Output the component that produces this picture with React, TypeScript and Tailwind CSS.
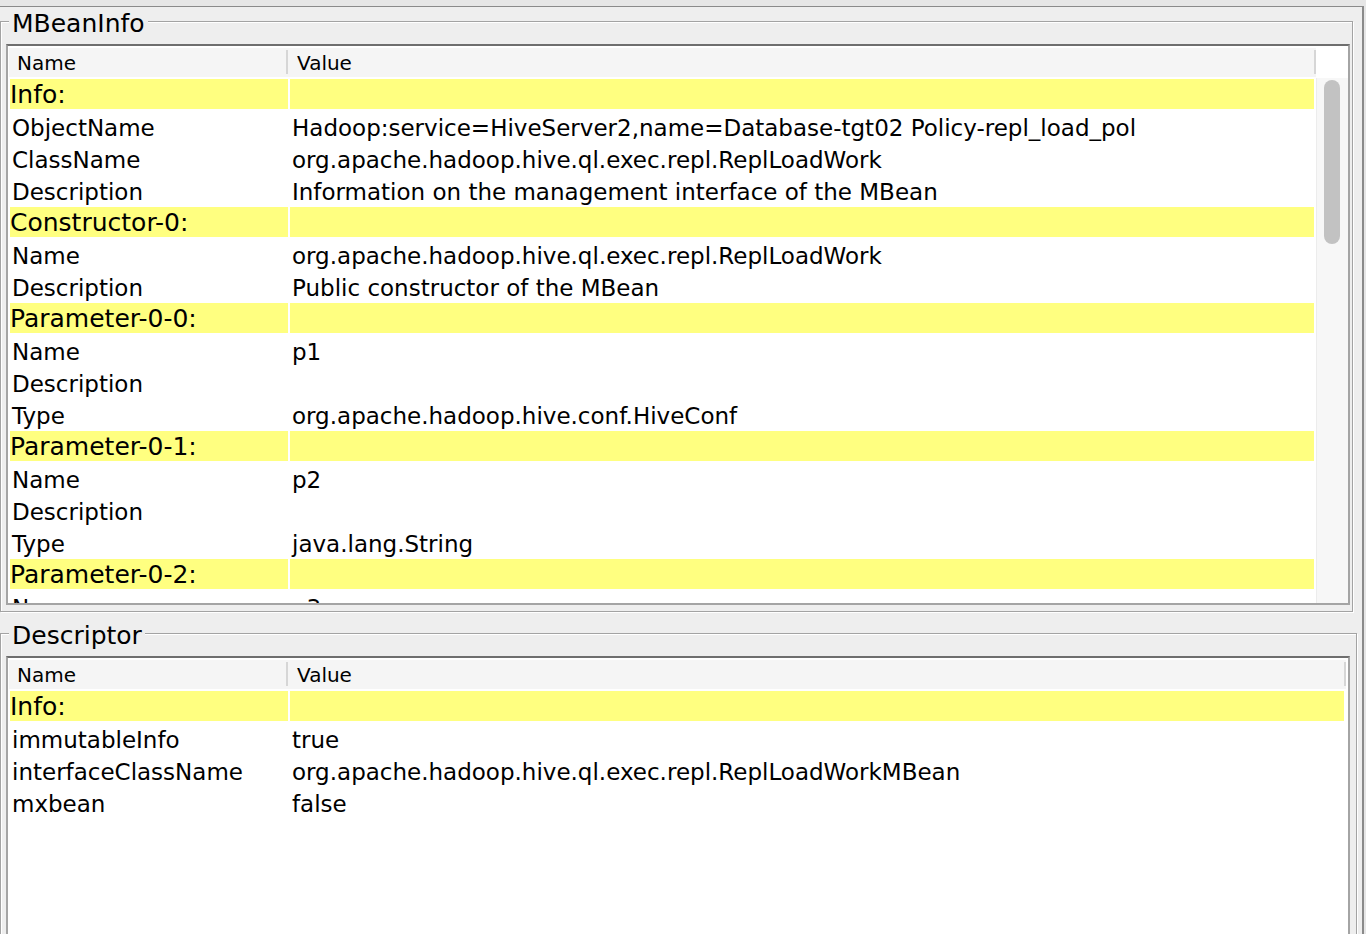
import React from 'react';

type Row = { section: string } | { name: string; value: string };

const mbeanRows: Row[] = [
  { section: 'Info:' },
  { name: 'ObjectName', value: 'Hadoop:service=HiveServer2,name=Database-tgt02 Policy-repl_load_pol' },
  { name: 'ClassName', value: 'org.apache.hadoop.hive.ql.exec.repl.ReplLoadWork' },
  { name: 'Description', value: 'Information on the management interface of the MBean' },
  { section: 'Constructor-0:' },
  { name: 'Name', value: 'org.apache.hadoop.hive.ql.exec.repl.ReplLoadWork' },
  { name: 'Description', value: 'Public constructor of the MBean' },
  { section: 'Parameter-0-0:' },
  { name: 'Name', value: 'p1' },
  { name: 'Description', value: '' },
  { name: 'Type', value: 'org.apache.hadoop.hive.conf.HiveConf' },
  { section: 'Parameter-0-1:' },
  { name: 'Name', value: 'p2' },
  { name: 'Description', value: '' },
  { name: 'Type', value: 'java.lang.String' },
  { section: 'Parameter-0-2:' },
  { name: 'Name', value: 'p3' },
];

const descriptorRows: Row[] = [
  { section: 'Info:' },
  { name: 'immutableInfo', value: 'true' },
  { name: 'interfaceClassName', value: 'org.apache.hadoop.hive.ql.exec.repl.ReplLoadWorkMBean' },
  { name: 'mxbean', value: 'false' },
];

const TableHeader = () => (
  <div className="flex h-[32px] pt-[2px] pb-[1px] pl-[1px]">
    <div className="flex flex-1 bg-[#f5f5f5]">
      <div className="relative w-[279px] pl-[8px] text-[20px] leading-[29px] pt-[1px]">
        Name
        <div className="absolute right-0 top-[2px] h-[24px] w-[2px] bg-[#d6d6d6]" />
      </div>
      <div className="relative flex-1 pl-[9px] text-[20px] leading-[29px] pt-[1px]">
        Value
        <div className="absolute right-0 top-[2px] h-[24px] w-[2px] bg-[#d6d6d6]" />
      </div>
    </div>
  </div>
);

const TableRows = ({ rows }: { rows: Row[] }) => (
  <div>
    {rows.map((row, i) =>
      'section' in row ? (
        <div key={i} className="flex h-[32px] gap-[2px] py-[1px] pl-[2px] pr-[2px]">
          <div className="w-[278px] bg-[#ffff80] pt-[1px] text-[25px] leading-[30px] whitespace-nowrap">
            {row.section}
          </div>
          <div className="flex-1 bg-[#ffff80]" />
        </div>
      ) : (
        <div key={i} className="flex h-[32px] gap-[2px] py-[1px] pl-[2px] pr-[2px]">
          <div className="w-[278px] pl-[2px] pt-[2px] text-[23px] leading-[30px] whitespace-nowrap">
            {row.name}
          </div>
          <div className="flex-1 pl-[2px] pt-[2px] text-[23px] leading-[30px] whitespace-nowrap overflow-hidden">
            {row.value}
          </div>
        </div>
      )
    )}
  </div>
);

const TitledPanel = ({
  title,
  className,
  children,
}: {
  title: string;
  className: string;
  children: React.ReactNode;
}) => (
  <div
    className={`relative border border-[#a3a3a3] pt-[22px] pl-[5px] shadow-[inset_1px_1px_0_#ffffff,1px_1px_0_#ffffff] ${className}`}
  >
    <span className="absolute left-[8px] top-[-12px] bg-[#eeeeee] pl-[3px] pr-[3px] text-[25px] leading-[28px]">
      {title}
    </span>
    {children}
  </div>
);

export default function App() {
  return (
    <div className="w-[1366px] h-[934px] overflow-hidden bg-[#e6e6e6] pt-[6px] font-['DejaVu_Sans'] text-black">
      <div className="w-[1364px] h-[928px] overflow-hidden border-t border-r-2 border-[#8a8a8a] bg-[#eeeeee] pt-[14px]">
        {/* MBeanInfo */}
        <TitledPanel title="MBeanInfo" className="w-[1353px] h-[591px]">
          <div className="w-[1344px] h-[561px] border-2 border-[#a4a4a4] border-t-[#6e6e6e] bg-white flex overflow-hidden">
            <div className="w-[1308px]">
              <TableHeader />
              <TableRows rows={mbeanRows} />
            </div>
            <div className="w-[32px] pt-[32px]">
              <div className="h-full bg-[#f7f7f7] border-l border-[#ececec] pt-[2px] pl-[7px]">
                <div className="w-[16px] h-[164px] rounded-full bg-[#c2c2c2]" />
              </div>
            </div>
          </div>
        </TitledPanel>

        {/* Descriptor */}
        <TitledPanel title="Descriptor" className="mt-[21px] w-[1357px] h-[320px]">
          <div className="w-[1344px] h-[300px] border-2 border-[#a4a4a4] border-t-[#6e6e6e] bg-white">
            <div className="w-[1338px]">
              <TableHeader />
              <TableRows rows={descriptorRows} />
            </div>
          </div>
        </TitledPanel>
      </div>
    </div>
  );
}
